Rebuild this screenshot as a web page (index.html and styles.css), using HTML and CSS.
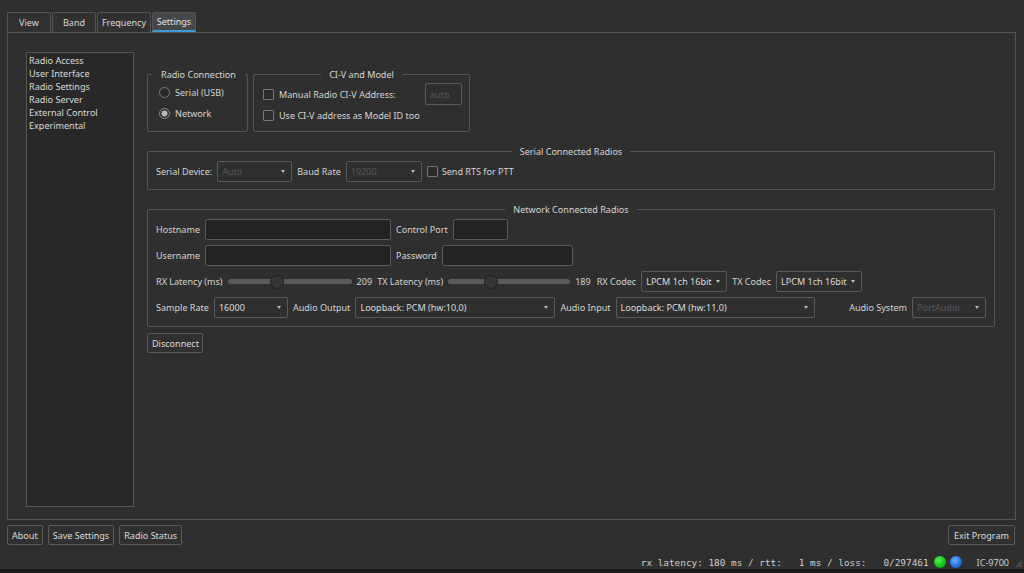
FILE: index.html
```html
<!DOCTYPE html>
<html>
<head>
<meta charset="utf-8">
<link rel="stylesheet" href="styles.css">
</head>
<body>
<div class="app">
  <div class="tabs">
    <div class="tab">View</div>
    <div class="tab">Band</div>
    <div class="tab t-freq">Frequency</div>
    <div class="tab active">Settings</div>
  </div>
  <div class="panel">
    <ul class="nav">
      <li>Radio Access</li>
      <li>User Interface</li>
      <li>Radio Settings</li>
      <li>Radio Server</li>
      <li>External Control</li>
      <li>Experimental</li>
    </ul>
    <div class="content">
      <div class="toprow">
        <fieldset class="group g-conn">
          <legend class="lg-left">Radio Connection</legend>
          <div class="gbody conn-body">
            <div class="row r21"><span class="rb"></span><span>Serial (USB)</span></div>
            <div class="row r21"><span class="rb on"></span><span>Network</span></div>
          </div>
        </fieldset>
        <fieldset class="group g-civ">
          <legend class="lg-center">CI-V and Model</legend>
          <div class="gbody civ-body">
            <div class="row r22"><span class="cb"></span><span class="cbl">Manual Radio CI-V Address:</span><span class="spacer"></span><span class="field dis w-auto">auto</span></div>
            <div class="row r21"><span class="cb"></span><span class="cbl">Use CI-V address as Model ID too</span></div>
          </div>
        </fieldset>
      </div>

      <fieldset class="group g-serial">
        <legend class="lg-center">Serial Connected Radios</legend>
        <div class="gbody serial-body">
          <div class="row r21 g5">
            <span>Serial Device:</span>
            <div class="combo dis w-dev"><span>Auto</span><i class="arrow"></i></div>
            <span>Baud Rate</span>
            <div class="combo dis w-baud"><span>19200</span><i class="arrow"></i></div>
            <span class="cb"></span><span class="cbl2">Send RTS for PTT</span>
          </div>
        </div>
      </fieldset>

      <fieldset class="group g-net">
        <legend class="lg-center">Network Connected Radios</legend>
        <div class="gbody net-body">
          <div class="row r21 g5">
            <span>Hostname</span>
            <span class="field w-host"></span>
            <span>Control Port</span>
            <span class="field w-port"></span>
          </div>
          <div class="row r21 g5">
            <span>Username</span>
            <span class="field w-user"></span>
            <span>Password</span>
            <span class="field w-pass"></span>
          </div>
          <div class="row r21 g5">
            <span>RX Latency (ms)</span>
            <div class="slider w-rxs"><div class="groove"></div><div class="handle" style="left:42px"></div></div>
            <span>209</span>
            <span>TX Latency (ms)</span>
            <div class="slider w-txs"><div class="groove"></div><div class="handle" style="left:36px"></div></div>
            <span>189</span>
            <span class="ml1">RX Codec</span>
            <div class="combo w-codec"><span>LPCM 1ch 16bit</span><i class="arrow"></i></div>
            <span>TX Codec</span>
            <div class="combo w-codec"><span>LPCM 1ch 16bit</span><i class="arrow"></i></div>
          </div>
          <div class="row r21 g5">
            <span>Sample Rate</span>
            <div class="combo w-rate"><span>16000</span><i class="arrow"></i></div>
            <span>Audio Output</span>
            <div class="combo w-aout"><span>Loopback: PCM (hw:10,0)</span><i class="arrow"></i></div>
            <span>Audio Input</span>
            <div class="combo w-ain"><span>Loopback: PCM (hw:11,0)</span><i class="arrow"></i></div>
            <span class="spacer"></span>
            <span>Audio System</span>
            <div class="combo dis w-sys"><span>PortAudio</span><i class="arrow"></i></div>
          </div>
        </div>
      </fieldset>

      <div class="btnrow">
        <button class="btn">Disconnect</button>
      </div>
    </div>
  </div>

  <div class="bottom">
    <button class="btn">About</button>
    <button class="btn">Save Settings</button>
    <button class="btn">Radio Status</button>
    <span class="spacer"></span>
    <button class="btn btn-exit">Exit Program</button>
  </div>

  <div class="status">
    <span class="mono">rx latency: 180 ms / rtt:   1 ms / loss:   0/297461</span>
    <span class="led green"></span>
    <span class="led blue"></span>
    <span class="model">IC-9700</span>
    <svg class="grip" width="8" height="8" viewBox="0 0 8 8">
      <path d="M7 1 L1 7 M7 3.5 L3.5 7 M7 6 L6 7" stroke="#6a6a6a" stroke-width="1" fill="none"/>
    </svg>
  </div>
</div>
</body>
</html>
```

FILE: styles.css
```css
* { box-sizing: border-box; }
html, body { margin: 0; padding: 0; }
body {
  width: 1024px;
  height: 573px;
  overflow: hidden;
  background: #1a1a1a;
  font-family: "Noto Sans", "DejaVu Sans", sans-serif;
  font-size: 9.05px;
  line-height: 13px;
  color: #d4d4d4;
}
.app {
  height: 569px;
  background: #2f2f2f;
  display: flex;
  flex-direction: column;
  position: relative;
}

/* tabs */
.tabs {
  display: flex;
  gap: 1px;
  margin-top: 12px;
  padding-left: 7px;
  height: 20px;
}
.tab {
  width: 44px;
  height: 20px;
  border: 1px solid #555;
  border-bottom: none;
  border-radius: 2px 2px 0 0;
  background: #313131;
  display: flex;
  align-items: center;
  justify-content: center;
  color: #d8d8d8;
}
.tab.t-freq { width: 54px; }
.tab.active {
  background: #45484b;
  border-bottom: 2px solid #3d9bd6;
  color: #e4e4e4;
}

/* panel */
.panel {
  margin-left: 7px;
  width: 1009px;
  height: 488px;
  border: 1px solid #545454;
  display: flex;
  padding: 19px 20px 12px 18px;
}
.nav {
  width: 108px;
  margin: 0;
  padding: 1px 2px;
  list-style: none;
  border: 1px solid #575757;
  background: #282828;
  color: #dadada;
}
.nav li { line-height: 13px; white-space: nowrap; }

.content {
  flex: 1;
  margin-left: 13px;
  display: flex;
  flex-direction: column;
  min-width: 0;
}

/* group boxes */
.group {
  border: 1px solid #555;
  border-radius: 2px;
  margin: 0;
  padding: 0;
  min-width: 0;
}
legend {
  line-height: 13px;
  color: #d6d6d6;
  padding: 0 8px;
}
.lg-left { margin-left: 4px; padding: 0 9px; }
.lg-center { margin-left: auto; margin-right: auto; }

.gbody { display: flex; flex-direction: column; }
.row { display: flex; align-items: center; white-space: nowrap; }
.r21 { height: 21px; }
.r22 { height: 22px; }
.g5 { gap: 5px; }
.spacer { flex: 1; }
.ml1 { margin-left: 1px; }

.toprow {
  display: flex;
  gap: 5px;
  margin-top: 16px;
}
.g-conn { width: 101px; }
.g-civ { width: 217px; }
.conn-body { padding: 1px 8px 7px 11px; }
.civ-body { padding: 2px 7px 5px 9px; }

.rb {
  width: 11px;
  height: 11px;
  border-radius: 50%;
  border: 1px solid #7a7a7a;
  background: #2a2a2a;
  margin-right: 5px;
  flex: none;
}
.rb.on {
  border-color: #8a8a8a;
  background: radial-gradient(circle, #b8b8b8 0 2.8px, #2a2a2a 3.3px);
}
.cb {
  width: 11px;
  height: 11px;
  border: 1px solid #777;
  border-radius: 1px;
  background: #2c2c2c;
  flex: none;
}
.cbl { margin-left: 5px; }
.cbl2 { margin-left: -1px; }

.field {
  height: 21px;
  border: 1px solid #5a5a5a;
  border-radius: 2px;
  background: #232323;
  display: flex;
  align-items: center;
  padding: 0 4px;
  flex: none;
}
.field.dis { background: #2f2f2f; color: #575757; }
.w-auto { width: 37px; height: 22px; }
.w-host { width: 186px; }
.w-port { width: 55px; }
.w-user { width: 186px; }
.w-pass { width: 131px; }

.g-serial { margin-top: 13px; }
.serial-body { padding: 3px 8px 7px 8px; }
.g-net { margin-top: 13px; }
.net-body { padding: 3px 8px 8px 8px; gap: 5px; }

.combo {
  height: 21px;
  border: 1px solid #5a5a5a;
  border-radius: 2px;
  background: #2f2f2f;
  display: flex;
  align-items: center;
  padding: 0 6px 0 4px;
  flex: none;
  color: #dcdcdc;
}
.combo span { flex: 1; overflow: hidden; }
.combo.dis { color: #555; }
.arrow {
  width: 0;
  height: 0;
  border-left: 2.5px solid transparent;
  border-right: 2.5px solid transparent;
  border-top: 3px solid #bdbdbd;
  flex: none;
}
.w-dev { width: 75px; }
.w-baud { width: 76px; }
.w-codec { width: 86px; }
.w-rate { width: 74px; }
.w-aout { width: 200px; }
.w-ain { width: 199px; }
.w-sys { width: 74px; }

.slider {
  height: 16px;
  position: relative;
  flex: none;
  display: flex;
  align-items: center;
}
.w-rxs { width: 124px; }
.w-txs { width: 122px; }
.groove {
  width: 100%;
  height: 5px;
  border-radius: 3px;
  background: #5a5a5a;
}
.handle {
  position: absolute;
  top: 1px;
  width: 14px;
  height: 14px;
  border-radius: 50%;
  background: #363636;
  border: 1px solid #1e1e1e;
}

.btn {
  font: inherit;
  line-height: 13px;
  color: #dcdcdc;
  background: #303030;
  border: 1px solid #5a5a5a;
  border-radius: 2px;
  height: 20px;
  padding: 0 4px;
  margin: 0;
}
.btnrow { display: flex; margin-top: 6px; }
.btnrow .btn { width: 56px; }

.bottom {
  display: flex;
  gap: 5px;
  margin-top: 5px;
  padding: 0 9px 0 7px;
  height: 20px;
}
.bottom .btn-exit { width: 67px; }

.status {
  flex: 1;
  display: flex;
  align-items: center;
  justify-content: flex-end;
  padding: 10px 0 0 0;
  color: #cdcdcd;
}
.mono {
  font-family: "DejaVu Sans Mono", monospace;
  font-size: 9.4px;
  white-space: pre;
  margin-right: 5px;
}
.led {
  width: 12px;
  height: 12px;
  border-radius: 50%;
  flex: none;
}
.led.green { background: radial-gradient(circle at 40% 35%, #5cf05c, #12c412 55%, #0a8a0a); margin-right: 4px; }
.led.blue { background: radial-gradient(circle at 40% 35%, #6fb0ff, #1f74e0 55%, #134fa8); }
.model { margin-left: 15px; margin-right: 15px; }
.grip { position: absolute; right: 1px; bottom: 1px; }
```
